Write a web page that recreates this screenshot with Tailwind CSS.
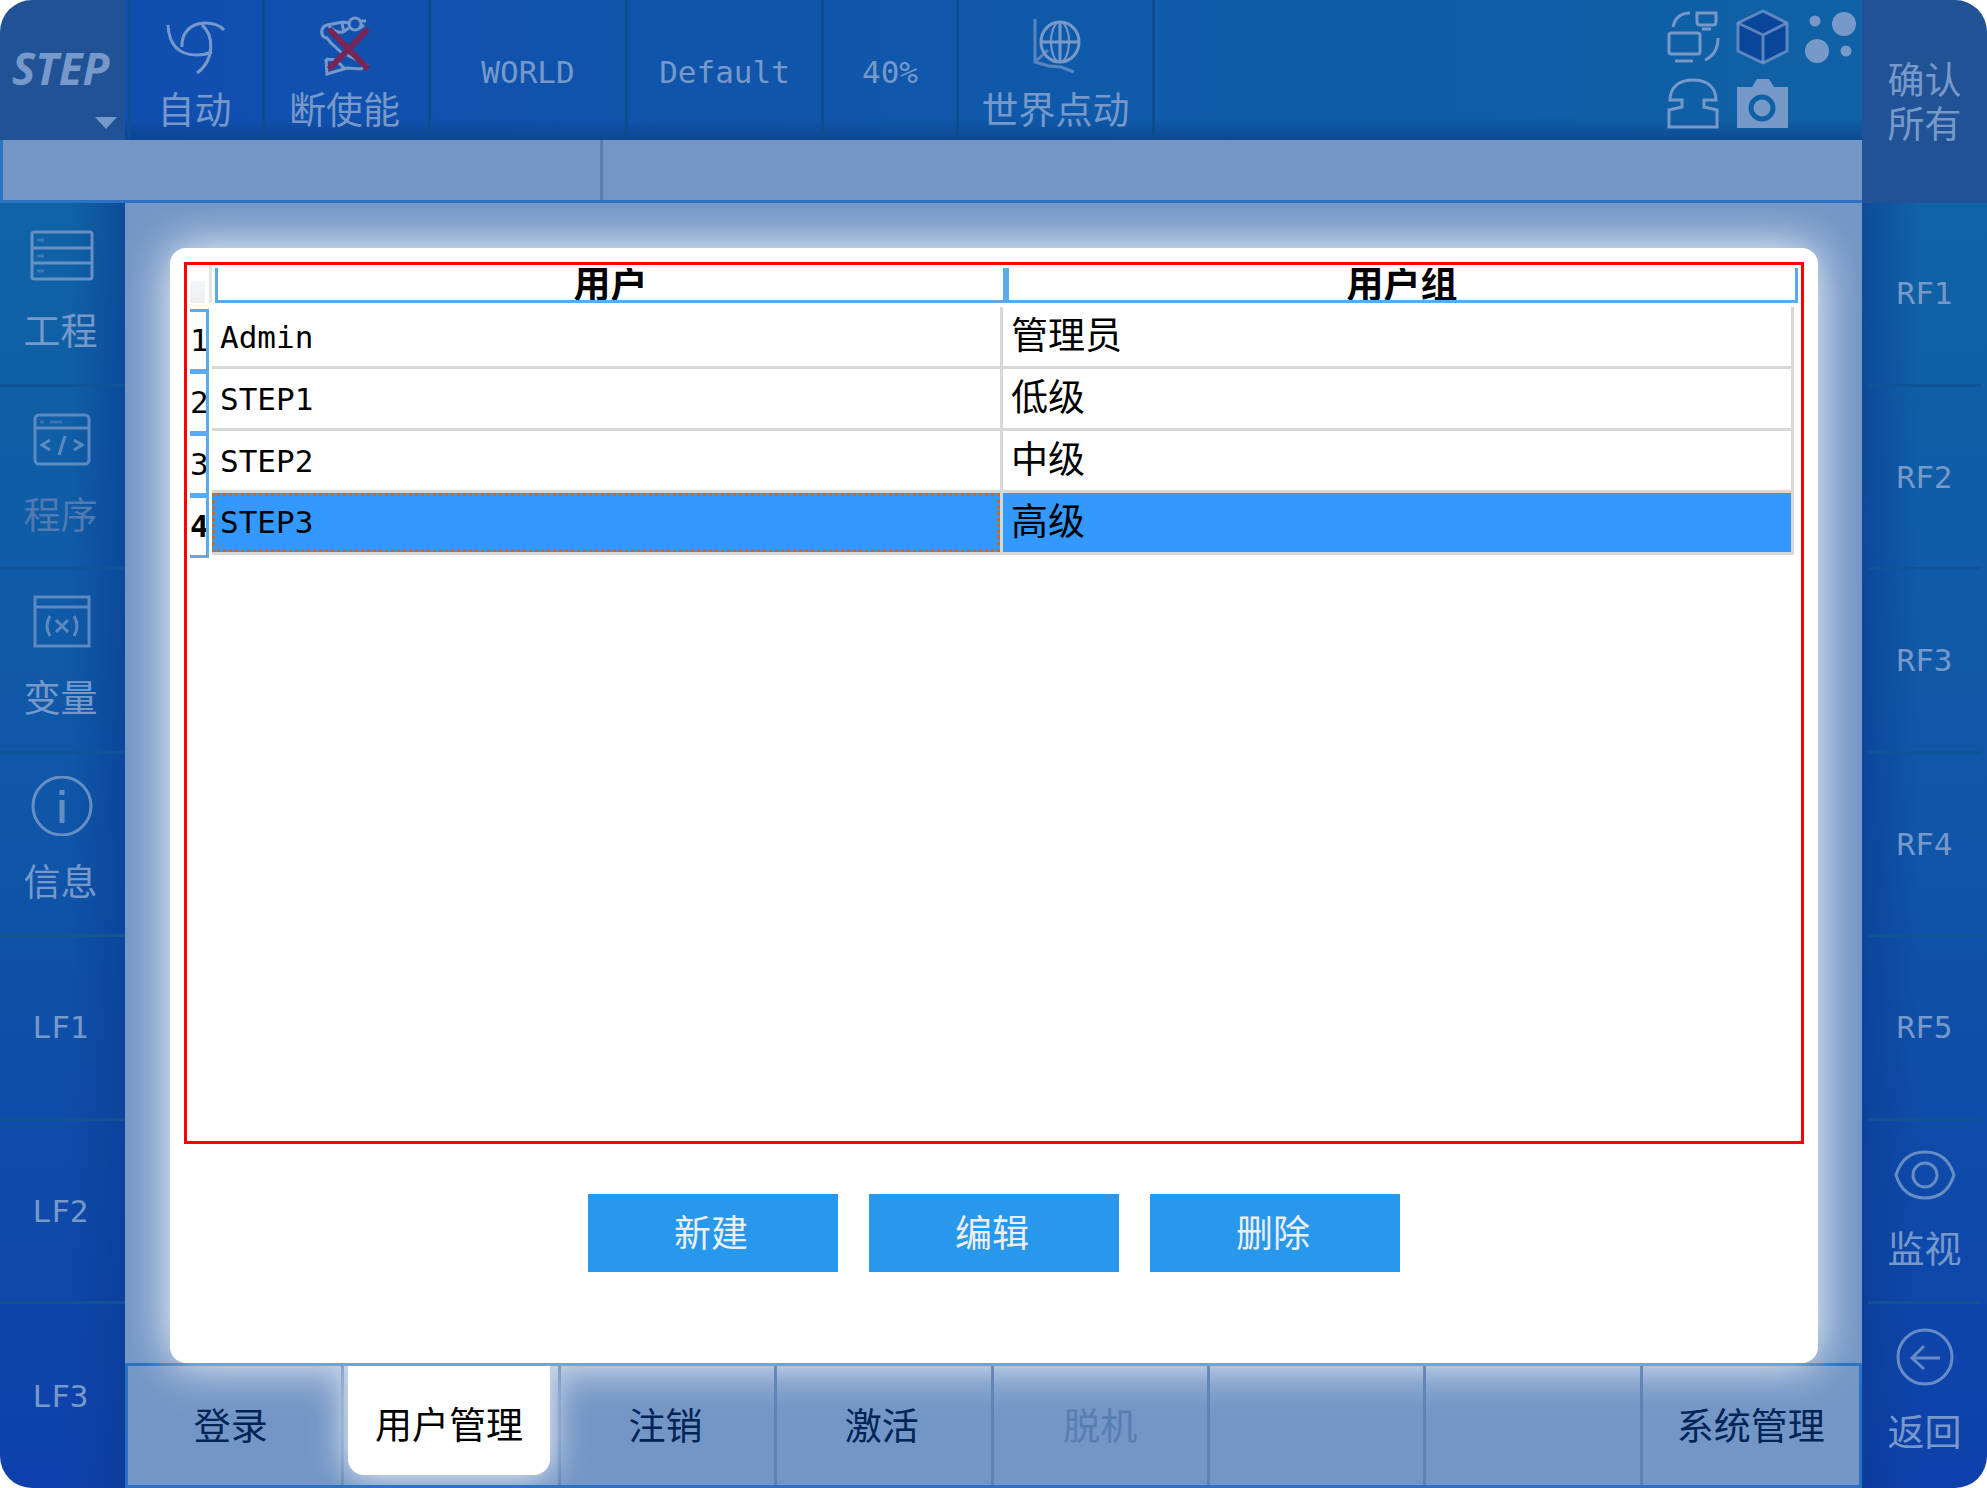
<!DOCTYPE html>
<html lang="zh-CN">
<head>
<meta charset="utf-8">
<meta name="viewport" content="width=device-width, initial-scale=1">
<title>用户管理</title>
<script src="https://cdn.jsdelivr.net/npm/@tailwindcss/browser@4"></script>
</head>
<body class="bg-white font-['DejaVu_Sans_Mono','Noto_Sans_CJK_SC',monospace] text-[#7799ca]">
<div class="flex min-h-screen overflow-hidden rounded-[32px]">
  <div class="flex min-w-0 flex-1 flex-col">

    <!-- Status bar -->
    <header class="flex h-[140px] shrink-0">
      <button type="button" class="flex w-[125px] flex-col bg-[#205295] pt-[39px] pr-2 pl-3 text-left">
        <span class="font-['Open_Sans',sans-serif] text-[44px] leading-[58px] font-bold italic">STEP</span>
        <svg class="mt-[20px] h-3 w-[22px] self-end" viewBox="0 0 22 12" fill="currentColor"><path d="M0 0h22L11 12z"/></svg>
      </button>
      <div class="flex flex-1 bg-[linear-gradient(to_bottom,transparent_84%,#0b4288b0),linear-gradient(to_right,#104eb0,#1055ab_35%,#0f5ca9_65%,#1061a5)]">
        <div class="w-[6px] border-r-[3px] border-[#0d5096]"></div>
        <button type="button" class="flex w-[134px] flex-col items-center border-r-[3px] border-[#0d4d8e] pt-4 pr-1">
          <svg class="h-[60px] w-[66px]" viewBox="162 16 66 60" fill="none" stroke="currentColor" stroke-width="3"><path d="M168 25C169 46 180 55 197 55Q205 55 212 52M182 47C181 34 190 23 205 23Q218 23 224 30M202 25C214 35 215 60 197 73"/></svg>
          <span class="mt-4 text-[37px] leading-10">自动</span>
        </button>
        <button type="button" class="flex w-[166px] flex-col items-center border-r-[3px] border-[#0d4d8e] pt-4 pr-1">
          <svg class="h-[60px] w-[60px]" viewBox="316 15 60 60" fill="none" stroke="currentColor" stroke-width="3"><circle cx="356" cy="23" r="6"/><path d="M361 20h6M361 27l4-3M350 22l-6-1-16 3c-7 2-7 12 0 13l4 5 13 12M330 25c5 6 9 7 14 6l6-4M343 22l2 10M327 58l1 15 20-6 14 1 5-4-8-5M327 58l10 1 8 8M348 54l12 6"/><path d="M330 28l39 40M369 28l-39 40" stroke="#7a2558" stroke-width="6"/></svg>
          <span class="mt-4 text-[37px] leading-10">断使能</span>
        </button>
        <button type="button" class="w-[197px] border-r-[3px] border-[#0d4d8e] pt-1 text-[31px]">WORLD</button>
        <button type="button" class="w-[196px] border-r-[3px] border-[#0d4d8e] pt-1 text-[31px]">Default</button>
        <button type="button" class="w-[135px] border-r-[3px] border-[#0d4d8e] pt-1 text-[31px]">40%</button>
        <button type="button" class="flex w-[196px] flex-col items-center border-r-[3px] border-[#0d4d8e] pt-4">
          <svg class="h-[60px] w-[60px]" viewBox="1026 16 60 60" fill="none" stroke="currentColor" stroke-width="2"><path d="M1035 19v43l14 4 12 1 13 5M1036 61l12-11" stroke-width="3" opacity=".7"/><ellipse cx="1060" cy="42" rx="19" ry="20" stroke-width="3"/><ellipse cx="1060" cy="42" rx="9" ry="20"/><path d="M1060 22v40M1041 42h38" stroke-width="3"/></svg>
          <span class="mt-4 text-[37px] leading-10">世界点动</span>
        </button>
        <div class="ml-auto grid grid-cols-[70px_70px_64px] grid-rows-[68px_68px] pt-[2px]">
          <svg class="h-[68px] w-[70px]" viewBox="1658 2 70 68" fill="none" stroke="currentColor" stroke-width="3"><rect x="1669" y="33" width="31" height="21" rx="2"/><path d="M1675 61h18M1673 27q3-14 17-14M1718 38q0 16-13 22M1702 29h9M1697 13h19v9q0 3-3 3h-13q-3 0-3-3z"/></svg>
          <svg class="h-[68px] w-[70px]" viewBox="1728 2 70 68" fill="#09469b" stroke="currentColor" stroke-opacity=".75" stroke-width="3" stroke-linejoin="round"><path d="M1763 11l24 12v28l-24 12-25-12V23z"/><path fill="none" d="M1738 23l25 12 24-12M1763 35v28"/></svg>
          <svg class="h-[68px] w-16" viewBox="1798 2 64 68" fill="currentColor"><circle cx="1815" cy="21" r="5.500"/><circle cx="1844" cy="24" r="12"/><circle cx="1817" cy="51" r="12"/><circle cx="1846" cy="51" r="5.500"/></svg>
          <svg class="h-[68px] w-[70px]" viewBox="1658 70 70 68" fill="none" stroke="currentColor" stroke-width="3"><path d="M1669 127v-17l13-3v-7h-12c0-12 8-20 23-20s23 8 23 20h-12v7l13 3v17z"/></svg>
          <svg class="h-[68px] w-[70px]" viewBox="1728 70 70 68" fill="currentColor"><path d="M1737 87h15l5-8h12l5 8h14v41h-51z"/><circle cx="1762" cy="108" r="11" fill="none" stroke="#1060a5" stroke-width="5"/></svg>
        </div>
      </div>
    </header>

    <!-- Message strip -->
    <div class="flex h-[63px] shrink-0 border-b-[3px] border-l-[3px] border-[#2c72c2] bg-[#7496c6]">
      <div class="w-[600px] border-r-[3px] border-[#587db2]"></div>
    </div>

    <div class="flex flex-1">
      <!-- Left function keys -->
      <nav class="grid w-[125px] shrink-0 grid-rows-7 bg-[linear-gradient(to_right,transparent_55%,#0a3a9090),linear-gradient(to_bottom,#1063a5,#0f57a8_45%,#0e40ab)]">
        <button type="button" class="flex flex-col items-center border-b-[3px] border-[#0f5499] pt-[22px] pr-1">
          <svg class="h-[60px] w-[66px] opacity-85" viewBox="0 0 66 60" fill="none" stroke="currentColor" stroke-width="3"><rect x="4" y="7" width="60" height="47" rx="2"/><path d="M4 23h60M4 38h60"/><path d="M9 15h7M9 31h7M9 46h7" opacity=".5"/></svg>
          <span class="mt-7 text-[37px] leading-10">工程</span>
        </button>
        <button type="button" disabled class="flex flex-col items-center border-b-[3px] border-[#0f5499] pt-[22px] pr-1">
          <svg class="h-[60px] w-[66px] opacity-75" viewBox="0 0 66 60" fill="none" stroke="currentColor" stroke-width="3"><rect x="7" y="6" width="54" height="49" rx="4"/><path d="M7 19h54M22 31l-8 5 8 5M46 31l8 5-8 5M37 27l-6 19"/><path d="M12 13h4M22 13h12" opacity=".5"/></svg>
          <span class="mt-7 text-[37px] leading-10 text-[#4f7ab3]">程序</span>
        </button>
        <button type="button" class="flex flex-col items-center border-b-[3px] border-[#0f5499] pt-[22px] pr-1">
          <svg class="h-[60px] w-[66px] opacity-75" viewBox="0 0 66 60" fill="none" stroke="currentColor" stroke-width="3"><path d="M7 5h54v49H7zM7 15h54M22 24q-6 10 0 20M46 24q6 10 0 20M28 28l12 12M40 28L28 40"/></svg>
          <span class="mt-7 text-[37px] leading-10">变量</span>
        </button>
        <button type="button" class="flex flex-col items-center border-b-[3px] border-[#14568f] pt-[22px] pr-1">
          <svg class="h-[60px] w-[66px] opacity-85" viewBox="0 0 66 60" fill="none" stroke="currentColor" stroke-width="3"><circle cx="34" cy="30" r="29"/><path d="M34 24v23M34 14v5" stroke-width="5"/></svg>
          <span class="mt-7 text-[37px] leading-10">信息</span>
        </button>
        <button type="button" class="border-b-[3px] border-[#125293] pr-1 text-[31px]">LF1</button>
        <button type="button" class="border-b-[3px] border-[#125293] pr-1 text-[31px]">LF2</button>
        <button type="button" class="pr-1 text-[31px]">LF3</button>
      </nav>

      <!-- Work area -->
      <main class="flex min-w-0 flex-1 flex-col overflow-hidden bg-[#7496c6]">
        <section class="mr-11 ml-[45px] mt-[45px] flex flex-1 flex-col rounded-2xl bg-white px-[14px] pt-[14px] text-black shadow-[0_0_48px_#ffffff]">
          <div class="flex-1 border-[3px] border-[#ff0000] pr-[7px]">
            <table class="w-full table-fixed border-separate border-spacing-0">
              <colgroup><col class="w-[25px]"><col><col></colgroup>
              <thead>
                <tr class="h-[42px] align-top">
                  <td class="p-0"><div class="flex h-[38px] justify-end border-r-[3px] border-[#e3e6ea]"><div class="mt-4 mr-1 w-[15px] bg-gradient-to-b from-[#f3f7fb] to-[#eeeeee]"></div></div></td>
                  <th scope="col" class="p-0 pt-[3px] pl-[3px]"><div class="h-[35px] overflow-hidden border-b-[3px] border-l-[3px] border-[#5aabee] text-[37px] leading-9 font-bold">用户</div></th>
                  <th scope="col" class="p-0 pt-[3px]"><div class="-mr-1 h-[35px] overflow-hidden border-r-[3px] border-b-[3px] border-l-[6px] border-[#5aabee] text-[37px] leading-9 font-bold">用户组</div></th>
                </tr>
              </thead>
              <tbody>
                <tr class="h-[62px]">
                  <th scope="row" class="p-0 align-top"><div class="mt-[2px] -mb-[3px] ml-[3px] h-[63px] w-[19px] overflow-hidden border-y-[3px] border-r-[3px] border-[#5aabee] text-left text-[31px] leading-[57px] font-normal">1</div></th>
                  <td class="border-r-[3px] border-b-[3px] border-[#d8d8d8] p-0 pl-2 text-[31px] leading-[40px]">Admin</td>
                  <td class="border-r-[3px] border-b-[3px] border-[#d8d8d8] p-0 pl-2 text-[37px] leading-[40px]">管理员</td>
                </tr>
                <tr class="h-[62px]">
                  <th scope="row" class="p-0 align-top"><div class="mt-[2px] -mb-[3px] ml-[3px] h-[63px] w-[19px] overflow-hidden border-y-[3px] border-r-[3px] border-[#5aabee] text-left text-[31px] leading-[57px] font-normal">2</div></th>
                  <td class="border-r-[3px] border-b-[3px] border-[#d8d8d8] p-0 pl-2 text-[31px] leading-[40px]">STEP1</td>
                  <td class="border-r-[3px] border-b-[3px] border-[#d8d8d8] p-0 pl-2 text-[37px] leading-[40px]">低级</td>
                </tr>
                <tr class="h-[62px]">
                  <th scope="row" class="p-0 align-top"><div class="mt-[2px] -mb-[3px] ml-[3px] h-[63px] w-[19px] overflow-hidden border-y-[3px] border-r-[3px] border-[#5aabee] text-left text-[31px] leading-[57px] font-normal">3</div></th>
                  <td class="border-r-[3px] border-b-[3px] border-[#d8d8d8] p-0 pl-2 text-[31px] leading-[40px]">STEP2</td>
                  <td class="border-r-[3px] border-b-[3px] border-[#d8d8d8] p-0 pl-2 text-[37px] leading-[40px]">中级</td>
                </tr>
                <tr class="h-[62px]" aria-selected="true">
                  <th scope="row" class="p-0 align-top"><div class="mt-[2px] -mb-[3px] ml-[3px] h-[63px] w-[19px] overflow-hidden border-y-[3px] border-r-[3px] border-[#5aabee] text-left text-[31px] leading-[57px] font-bold">4</div></th>
                  <td class="border-r-[3px] border-b-[3px] border-[#d8d8d8] bg-[#3399ff] p-0 text-[31px]"><div class="h-[59px] border-[3px] border-dotted border-[#cc6a10] pl-[5px] leading-[53px]">STEP3</div></td>
                  <td class="border-r-[3px] border-b-[3px] border-[#d8d8d8] bg-[#3399ff] p-0 pl-2 text-[37px] leading-[40px]">高级</td>
                </tr>
              </tbody>
            </table>
          </div>
          <div class="mt-[50px] mb-[91px] flex justify-center gap-[31px] text-[37px] text-[#eeeeee]">
            <button type="button" class="h-[78px] w-[250px] bg-[#2898ec] pt-1 pr-1">新建</button>
            <button type="button" class="h-[78px] w-[250px] bg-[#2898ec] pt-1 pr-1">编辑</button>
            <button type="button" class="h-[78px] w-[250px] bg-[#2898ec] pt-1 pr-1">删除</button>
          </div>
        </section>

        <!-- Page tabs -->
        <div class="h-[3px] bg-[linear-gradient(to_right,#2c72c2_20px,#5aabee_70px,#5aabee_calc(100%-70px),#2c72c2_calc(100%-20px))]"></div>
        <nav class="grid h-[122px] grid-cols-8 overflow-hidden border-x-[3px] border-b-[3px] border-[#2c72c2] text-[37px] text-[#002455]">
          <button type="button" class="border-r-[3px] border-[#587db2]/80 pt-1 pr-2">登录</button>
          <div class="border-r-[3px] border-[#587db2]/80 pr-2 pl-1">
            <button type="button" class="h-[109px] w-full rounded-b-2xl bg-white pt-3 text-black shadow-[0_0_36px_#ffffff]" aria-current="page">用户管理</button>
          </div>
          <button type="button" class="border-r-[3px] border-[#587db2]/80 pt-1 pr-1">注销</button>
          <button type="button" class="border-r-[3px] border-[#587db2]/80 pt-1 pr-1">激活</button>
          <button type="button" disabled class="border-r-[3px] border-[#587db2]/80 pt-1 text-[#587db2]">脱机</button>
          <div class="border-r-[3px] border-[#587db2]/80"></div>
          <div class="border-r-[3px] border-[#587db2]/80"></div>
          <button type="button" class="pt-1">系统管理</button>
        </nav>
      </main>
    </div>
  </div>

  <!-- Right function keys -->
  <nav class="flex w-[125px] shrink-0 flex-col">
    <button type="button" class="h-[203px] shrink-0 bg-[#205295] px-6 pt-1 text-[37px] leading-[44px]">确认所有</button>
    <div class="grid flex-1 grid-rows-7 bg-[linear-gradient(to_left,transparent_55%,#0a3a9090),linear-gradient(to_bottom,#1063a5,#0f57a8_45%,#0e40ab)] px-[6px]">
      <button type="button" class="border-b-[3px] border-[#0f5499] text-[31px]">RF1</button>
      <button type="button" class="border-b-[3px] border-[#0f5499] text-[31px]">RF2</button>
      <button type="button" class="border-b-[3px] border-[#0f5499] text-[31px]">RF3</button>
      <button type="button" class="border-b-[3px] border-[#0f5499] text-[31px]">RF4</button>
      <button type="button" class="border-b-[3px] border-[#125293] text-[31px]">RF5</button>
      <button type="button" class="flex flex-col items-center border-b-[3px] border-[#125293] pt-[22px]">
        <svg class="h-[60px] w-[66px] opacity-85" viewBox="0 0 66 60" fill="none" stroke="currentColor" stroke-width="3"><path d="M4 32C9 16 19 9 33 9s24 7 29 23C57 48 47 55 33 55S9 48 4 32z"/><circle cx="33" cy="32" r="12"/></svg>
        <span class="mt-7 text-[37px] leading-10">监视</span>
      </button>
      <button type="button" class="flex flex-col items-center pt-[22px]">
        <svg class="h-[60px] w-[66px] opacity-85" viewBox="0 0 66 60" fill="none" stroke="currentColor" stroke-width="3"><circle cx="33" cy="31" r="27"/><path d="M48 32H20M32 20L20 32l12 11"/></svg>
        <span class="mt-7 text-[37px] leading-10">返回</span>
      </button>
    </div>
  </nav>
</div>
</body>
</html>
